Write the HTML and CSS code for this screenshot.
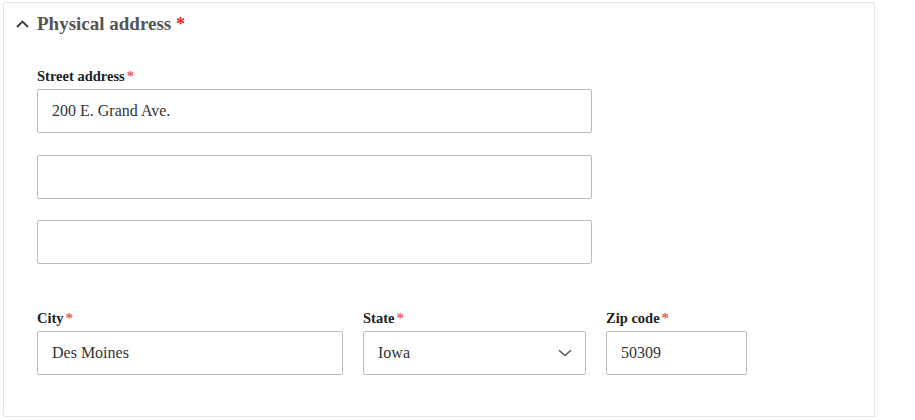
FILE: index.html
```html
<!DOCTYPE html>
<html lang="en">
<head>
<meta charset="utf-8">
<title>Physical address</title>
<link rel="stylesheet" href="styles.css">
</head>
<body>
<section class="card">
  <div class="card-header">
    <svg class="chev-up" width="13" height="8" viewBox="0 0 13 8" aria-hidden="true"><path d="M1 7 L6.5 1.6 L12 7" fill="none" stroke="#444" stroke-width="2.1"/></svg>
    <h2 class="card-title">Physical address <span class="req-strong">*</span></h2>
  </div>
  <div class="card-body">
    <div class="field">
      <label class="label">Street address<span class="req">*</span></label>
      <div class="stack">
        <div class="input wide">200 E. Grand Ave.</div>
        <div class="input wide"></div>
        <div class="input wide"></div>
      </div>
    </div>
    <div class="row">
      <div class="field">
        <label class="label">City<span class="req">*</span></label>
        <div class="input city">Des Moines</div>
      </div>
      <div class="field">
        <label class="label">State<span class="req">*</span></label>
        <div class="input select state">
          <span>Iowa</span>
          <svg class="chev-down" width="14" height="8" viewBox="0 0 14 8" aria-hidden="true"><path d="M1 1.2 L7 6.6 L13 1.2" fill="none" stroke="#555" stroke-width="1.4"/></svg>
        </div>
      </div>
      <div class="field">
        <label class="label">Zip code<span class="req">*</span></label>
        <div class="input zip">50309</div>
      </div>
    </div>
  </div>
</section>
</body>
</html>
```
FILE: styles.css
```css
html, body {
  margin: 0;
  padding: 0;
  background: #ffffff;
}
body {
  padding: 2px 0 0 3px;
  font-family: "Liberation Serif", "Times New Roman", serif;
}
.card {
  box-sizing: border-box;
  width: 872px;
  border: 1px solid #e4e4e4;
  border-radius: 2px;
  box-shadow: 0 1px 2px rgba(0,0,0,0.06);
  padding: 12px 0 41px 0;
}
.card-header {
  display: flex;
  align-items: center;
  padding-left: 12px;
  height: 18px;
}
.chev-up {
  display: block;
  margin-right: 8px;
}
.card-title {
  margin: 0;
  font-size: 19px;
  line-height: 18px;
  font-weight: 700;
  color: #555555;
}
.req-strong {
  color: #e8191b;
  font-size: 18px;
}
.card-body {
  padding-left: 33px;
  margin-top: 35px;
}
.field {
  display: flex;
  flex-direction: column;
}
.label {
  display: block;
  height: 16px;
  font-size: 14.5px;
  line-height: 16px;
  font-weight: 700;
  color: #222222;
  margin-bottom: 5px;
}
.req {
  color: #e06464;
  margin-left: 2px;
  font-size: 15px;
  line-height: 0;
}
.stack {
  display: flex;
  flex-direction: column;
  gap: 21.5px;
}
.input {
  box-sizing: border-box;
  height: 44px;
  border: 1px solid #bcbcbc;
  border-radius: 2px;
  padding: 0 14px;
  display: flex;
  align-items: center;
  font-size: 16px;
  color: #333333;
}
.wide { width: 555px; }
.row {
  display: flex;
  gap: 20px;
  margin-top: 46px;
}
.city { width: 306px; }
.state { width: 223px; }
.zip { width: 141px; }
.select {
  justify-content: space-between;
  padding-right: 13px;
}
.chev-down { display: block; }
```
